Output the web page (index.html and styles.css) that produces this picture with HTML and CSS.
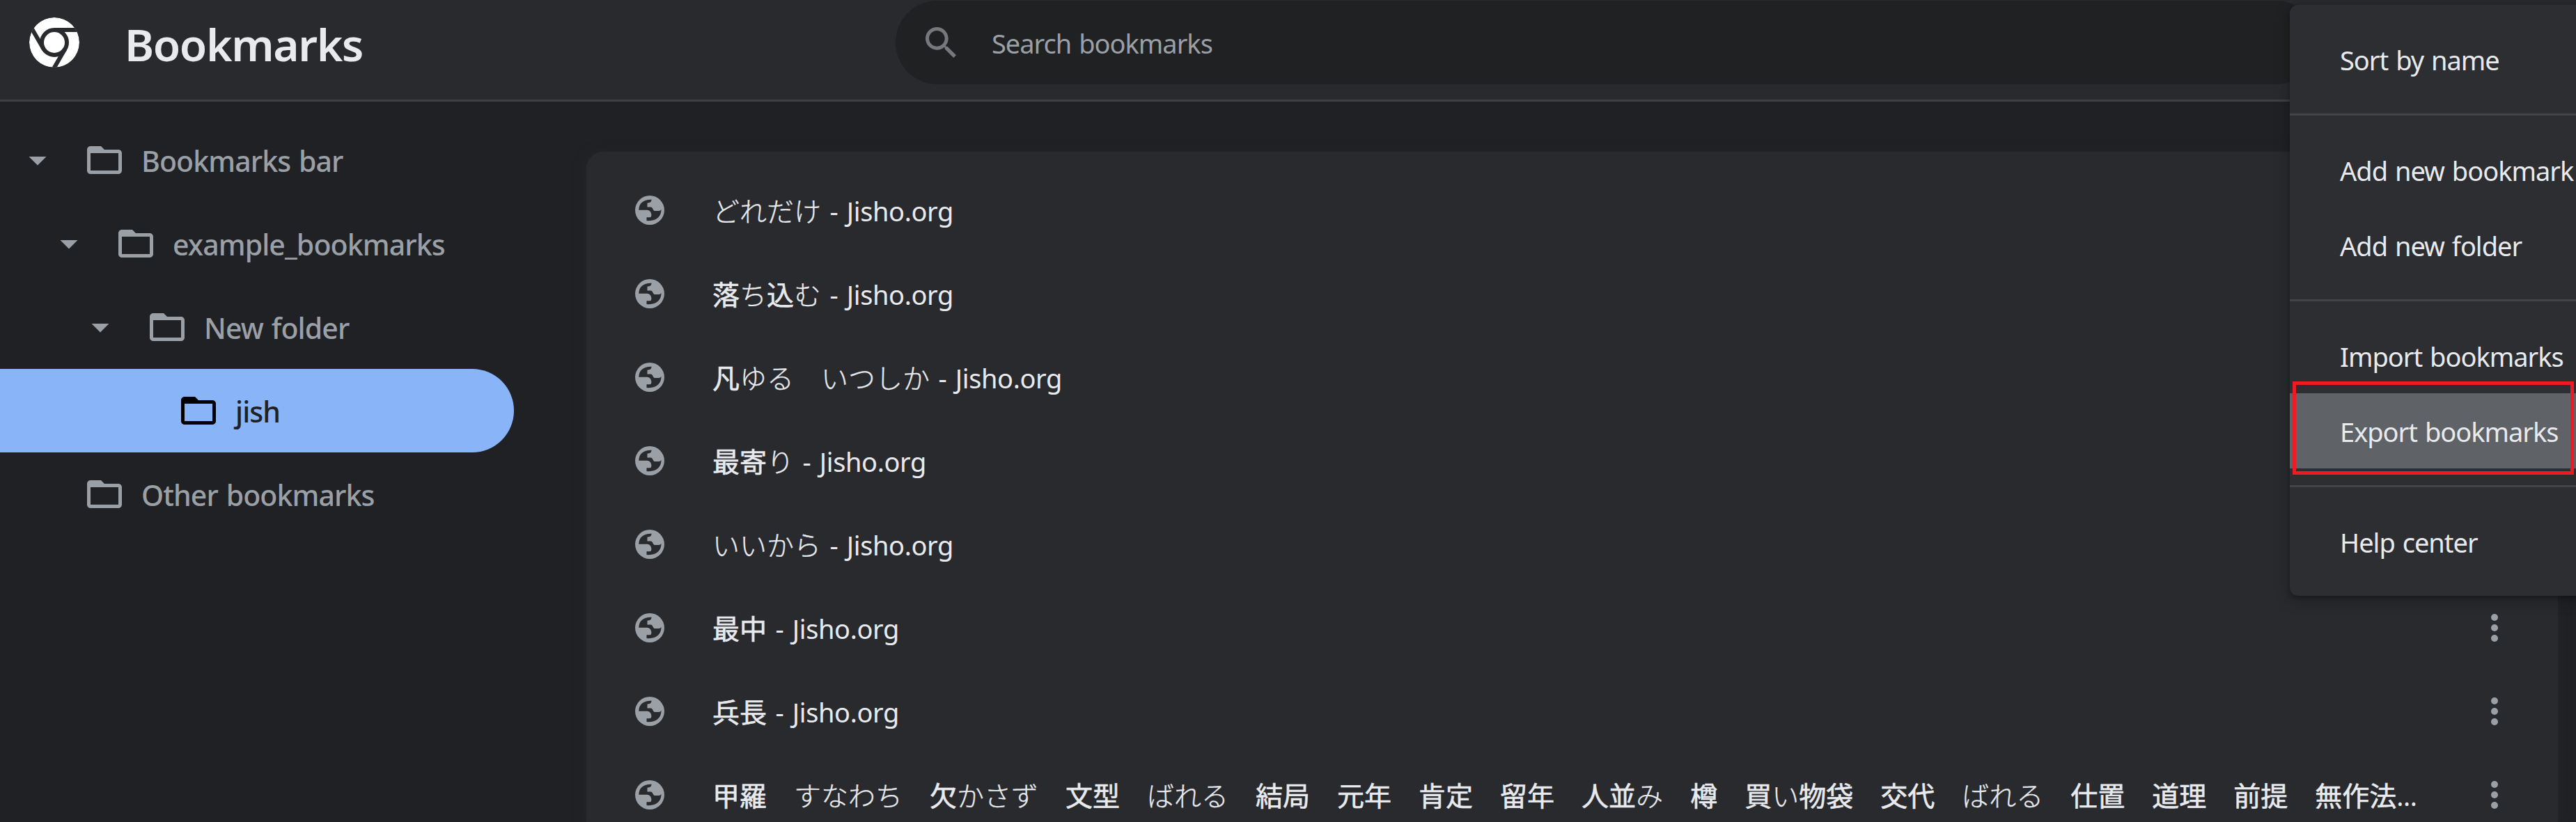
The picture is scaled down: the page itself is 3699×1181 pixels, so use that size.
FILE: index.html
```html
<!DOCTYPE html>
<html lang="en">
<head>
<meta charset="utf-8">
<title>Bookmarks</title>
<link rel="stylesheet" href="styles.css">
</head>
<body>
<svg class="defs" aria-hidden="true">
  <symbol id="arrow" viewBox="0 0 24 24"><path d="M7 10l5 5 5-5z"/></symbol>
  <symbol id="folder" viewBox="0 0 24 24"><path d="M20 6h-8l-2-2H4c-1.1 0-1.99.9-1.99 2L2 18c0 1.1.9 2 2 2h16c1.1 0 2-.9 2-2V8c0-1.1-.9-2-2-2zm0 12H4V8h16v10z"/></symbol>
  <symbol id="globe" viewBox="0 0 48 48">
    <circle cx="24" cy="24" r="21"/>
    <path fill="#292a2d" d="M8.300 23.800C8.300 14 15 8.500 26.700 8.700C26 11 26 13.500 20.500 13.500V19.500H25C29 19.500 28 24.500 31 25H37C39 25 40 24 40.500 22.500C41 33 33 40.500 19.500 39V34.300H23.500C26 34.300 27 32 26 28.500C25 25 22.500 23.800 19 23.800Z"/>
  </symbol>
  <symbol id="dots" viewBox="0 0 10 40"><circle cx="5" cy="5" r="5"/><circle cx="5" cy="20" r="5"/><circle cx="5" cy="35" r="5"/></symbol>
</svg>
<header class="toolbar">
  <svg class="logo" viewBox="0 0 72 72">
    <circle cx="36" cy="36" r="36" fill="#fff"/>
    <circle cx="36" cy="36" r="18" fill="none" stroke="#292a2d" stroke-width="6"/>
    <path d="M36 18H72M20.400 45L2.400 13.800M51.600 45L33.600 76.200" fill="none" stroke="#292a2d" stroke-width="6"/>
  </svg>
  <h1 class="title">Bookmarks</h1>
  <div class="search">
    <svg class="search-icon" viewBox="3 3 17.490 17.490"><path d="M15.500 14h-.79l-.28-.27C15.410 12.590 16 11.110 16 9.500 16 5.910 13.090 3 9.500 3S3 5.910 3 9.500 5.910 16 9.500 16c1.610 0 3.090-.59 4.230-1.570l.27.28v.79l5 4.990L20.490 19l-4.990-5zm-6 0C7.010 14 5 11.990 5 9.500S7.010 5 9.500 5 14 7.010 14 9.500 11.990 14 9.500 14z"/></svg>
    <span class="placeholder">Search bookmarks</span>
  </div>
</header>
<div class="content">
  <nav class="tree">
    <div class="node"><svg class="icon"><use href="#arrow"/></svg><svg class="icon folder"><use href="#folder"/></svg><span class="label">Bookmarks bar</span></div>
    <div class="node level-1"><svg class="icon"><use href="#arrow"/></svg><svg class="icon folder"><use href="#folder"/></svg><span class="label">example_bookmarks</span></div>
    <div class="node level-2"><svg class="icon"><use href="#arrow"/></svg><svg class="icon folder"><use href="#folder"/></svg><span class="label">New folder</span></div>
    <div class="node level-3 selected"><span class="icon"></span><svg class="icon folder"><use href="#folder"/></svg><span class="label">jish</span></div>
    <div class="node"><span class="icon"></span><svg class="icon folder"><use href="#folder"/></svg><span class="label">Other bookmarks</span></div>
  </nav>
  <main class="list">
    <div class="row"><svg class="globe"><use href="#globe"/></svg><span class="name"><span class="cjk"><span class="kana">どれだけ</span></span> - Jisho.org</span><svg class="dots"><use href="#dots"/></svg></div>
    <div class="row"><svg class="globe"><use href="#globe"/></svg><span class="name"><span class="cjk">落<span class="kana">ち</span>込<span class="kana">む</span></span> - Jisho.org</span><svg class="dots"><use href="#dots"/></svg></div>
    <div class="row"><svg class="globe"><use href="#globe"/></svg><span class="name"><span class="cjk">凡<span class="kana">ゆる　いつしか</span></span> - Jisho.org</span><svg class="dots"><use href="#dots"/></svg></div>
    <div class="row"><svg class="globe"><use href="#globe"/></svg><span class="name"><span class="cjk">最寄<span class="kana">り</span></span> - Jisho.org</span><svg class="dots"><use href="#dots"/></svg></div>
    <div class="row"><svg class="globe"><use href="#globe"/></svg><span class="name"><span class="cjk"><span class="kana">いいから</span></span> - Jisho.org</span><svg class="dots"><use href="#dots"/></svg></div>
    <div class="row"><svg class="globe"><use href="#globe"/></svg><span class="name"><span class="cjk">最中</span> - Jisho.org</span><svg class="dots"><use href="#dots"/></svg></div>
    <div class="row"><svg class="globe"><use href="#globe"/></svg><span class="name"><span class="cjk">兵長</span> - Jisho.org</span><svg class="dots"><use href="#dots"/></svg></div>
    <div class="row"><svg class="globe"><use href="#globe"/></svg><span class="name"><span class="cjk">甲羅　<span class="kana">すなわち</span>　欠<span class="kana">かさず</span>　文型　<span class="kana">ばれる</span>　結局　元年　肯定　留年　人並<span class="kana">み</span>　樽　買<span class="kana">い</span>物袋　交代　<span class="kana">ばれる</span>　仕置　道理　前提　無作法</span>...</span><svg class="dots"><use href="#dots"/></svg></div>
  </main>
</div>
<div class="menu">
  <div class="item">Sort by name</div>
  <hr class="sep">
  <div class="item">Add new bookmark</div>
  <div class="item">Add new folder</div>
  <hr class="sep">
  <div class="item">Import bookmarks</div>
  <div class="item active">Export bookmarks</div>
  <hr class="sep">
  <div class="item">Help center</div>
</div>
<div class="highlight"></div>
</body>
</html>
```
FILE: styles.css
```css
* { box-sizing: border-box; }
body {
  margin: 0;
  width: 3699px;
  height: 1181px;
  overflow: hidden;
  position: relative;
  display: flex;
  flex-direction: column;
  background: #202124;
  color: #e8eaed;
  font: 400 38px/1 "Noto Sans", "Noto Sans CJK JP", sans-serif;
  letter-spacing: -1px;
  word-spacing: 2px;
  white-space: nowrap;
}
svg { display: block; flex: none; fill: currentColor; }
.defs { position: absolute; width: 0; height: 0; }

.toolbar {
  flex: none;
  height: 146px;
  display: flex;
  align-items: flex-start;
  padding-left: 42px;
  background: #292a2d;
  border-bottom: 3px solid #3f4042;
}
.logo { width: 72px; height: 72px; margin-top: 25px; border-radius: 50%; }
.title {
  width: 1107px;
  margin: 0 0 0 65px;
  font-size: 64px;
  font-weight: 600;
  line-height: 128px;
  letter-spacing: -1.4px;
}
.search {
  width: 2042px;
  height: 120px;
  margin-top: 1px;
  display: flex;
  align-items: center;
  padding-left: 43px;
  border-radius: 60px;
  background: #202122;
}
.search-icon { width: 44px; height: 44px; color: #77787d; }
.placeholder { margin-left: 51px; padding-top: 2px; color: #9aa0a6; }

.content { flex: 1; min-height: 0; display: flex; }
.tree { width: 842px; padding-top: 24px; color: #9aa0a6; font-weight: 500; font-size: 41px; letter-spacing: -0.9px; }
.node { width: 738px; height: 120px; display: flex; align-items: center; padding-left: 24px; }
.label { padding-top: 2px; }
.level-1 { padding-left: 69px; }
.level-2 { padding-left: 114px; }
.level-3 { padding-left: 159px; }
.selected { background: #8ab4f8; color: #202124; border-radius: 0 60px 60px 0; }
.icon { width: 60px; height: 60px; }
.folder { margin: 0 23px 0 36px; }
.selected .folder { color: #000; }

.list {
  width: 2831px;
  margin-top: 72px;
  padding: 24px 86px 0 67px;
  border-radius: 24px 24px 0 0;
  background: #292a2d;
  box-shadow: 0 3px 18px rgba(41, 42, 45, 0.7);
}
.row { height: 120px; display: flex; align-items: center; }
.globe { width: 48px; height: 48px; color: #9aa0a6; }
.name { flex: 1; margin-left: 66px; word-spacing: 3px; letter-spacing: -0.4px; }
.cjk { font: 400 39px/1 "Noto Sans CJK JP", sans-serif; letter-spacing: 0; word-spacing: 0; -webkit-text-stroke: 0.6px currentColor; }
.kana { font-weight: 300; -webkit-text-stroke-width: 0.3px; }
.dots { width: 10px; height: 40px; color: #9aa0a6; }

.menu {
  position: absolute;
  left: 3288px;
  top: 7px;
  width: 460px;
  padding: 24px 0;
  border-radius: 12px;
  background: #2d2e32;
  box-shadow: 0 3px 6px rgba(0, 0, 0, 0.3), 0 6px 18px 6px rgba(0, 0, 0, 0.15);
}
.item { height: 108px; padding-left: 72px; line-height: 110px; }
.active { background: #5f6266; }
.sep { height: 3px; margin: 24px 0; border: 0; background: #434448; }
.highlight {
  position: absolute;
  left: 3292px;
  top: 548px;
  width: 404px;
  height: 134px;
  border: 5px solid #ed1c24;
}
```
